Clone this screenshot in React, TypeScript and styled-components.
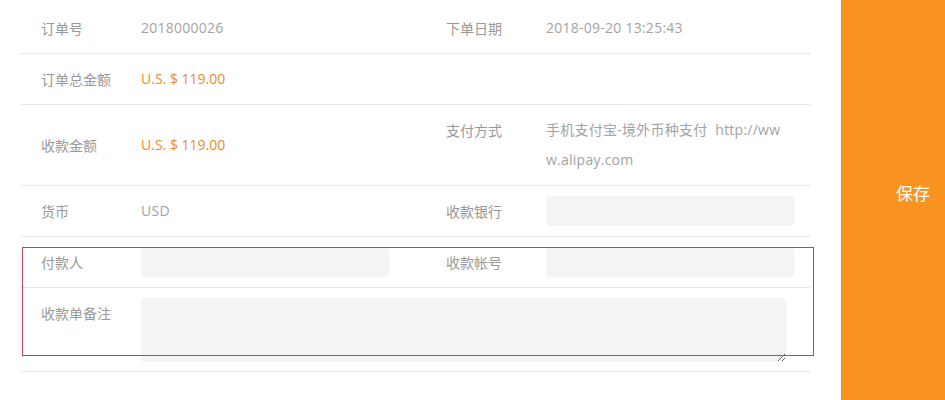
import styled, { createGlobalStyle } from 'styled-components'

const GlobalStyle = createGlobalStyle`
  html, body {
    margin: 0;
    padding: 0;
    background: #fff;
    overflow: hidden;
  }
  body {
    font-family: "Open Sans", "Noto Sans CJK SC", sans-serif;
    font-size: 14px;
  }
`

const App = () => {
  return (
    <>
      <GlobalStyle />
      <StyledPage>
        <StyledForm>
          <Row>
            <Label>订单号</Label>
            <Value>2018000026</Value>
            <Label>下单日期</Label>
            <Value>2018-09-20 13:25:43</Value>
          </Row>
          <Row>
            <Label>订单总金额</Label>
            <Value $accent>U.S. $ 119.00</Value>
          </Row>
          <Row>
            <Label $center>收款金额</Label>
            <Value $center $accent>U.S. $ 119.00</Value>
            <Label>支付方式</Label>
            <Value $wrap>手机支付宝-境外币种支付{'\u00a0 '}http://www.alipay.com</Value>
          </Row>
          <Row>
            <Label>货币</Label>
            <Value>USD</Value>
            <Label>收款银行</Label>
            <Value>
              <Input />
            </Value>
          </Row>
          <Row>
            <Label>付款人</Label>
            <Value>
              <Input />
            </Value>
            <Label>收款帐号</Label>
            <Value>
              <Input />
            </Value>
          </Row>
          <Row>
            <Label>收款单备注</Label>
            <Wide>
              <Remark />
            </Wide>
          </Row>
          <Highlight />
        </StyledForm>
        <SaveButton>保存</SaveButton>
      </StyledPage>
    </>
  )
}

export default App

const StyledPage = styled.div`
  display: flex;
  width: 945px;
  height: 400px;
`

const StyledForm = styled.div`
  position: relative;
  width: 791px;
  padding: 3px 30px 0 20px;
`

const Row = styled.div`
  display: grid;
  grid-template-columns: 100px 305px 100px 248px;
  padding: 10px 0 10px 21px;
  min-height: 30px;
  line-height: 30px;
  border-bottom: 1px solid #ebebeb;
`

const Label = styled.div<{ $center?: boolean }>`
  color: #999;
  font-family: "Noto Sans CJK SC", sans-serif;
  font-size: 14px;
  align-self: ${(p) => (p.$center ? 'center' : 'start')};
`

const Value = styled.div<{ $center?: boolean; $accent?: boolean; $wrap?: boolean }>`
  color: ${(p) => (p.$accent ? '#f0892a' : '#a3a3a3')};
  letter-spacing: ${(p) => (p.$accent ? '0' : '0.25px')};
  align-self: ${(p) => (p.$center ? 'center' : 'start')};
  word-break: ${(p) => (p.$wrap ? 'break-all' : 'normal')};
`

const Wide = styled.div`
  grid-column: 2 / 5;
  display: flex;
`

const Input = styled.input`
  display: block;
  box-sizing: border-box;
  width: 248px;
  height: 30px;
  border: none;
  border-radius: 4px;
  background: #f4f4f4;
  outline: none;
`

const Remark = styled.textarea`
  display: block;
  box-sizing: border-box;
  width: 645px;
  height: 64px;
  border: none;
  border-radius: 4px;
  background: #f4f4f4;
  outline: none;
  margin-bottom: -1px;
`

const Highlight = styled.div`
  position: absolute;
  left: 22px;
  top: 247px;
  width: 790px;
  height: 107px;
  border: 1px solid #c9404f;
  pointer-events: none;
`

const SaveButton = styled.div`
  flex: 1;
  display: flex;
  align-items: center;
  padding-left: 55px;
  padding-bottom: 16px;
  background: #f7931e;
  color: #fff;
  font-family: "Noto Sans CJK SC", sans-serif;
  font-size: 17px;
`
